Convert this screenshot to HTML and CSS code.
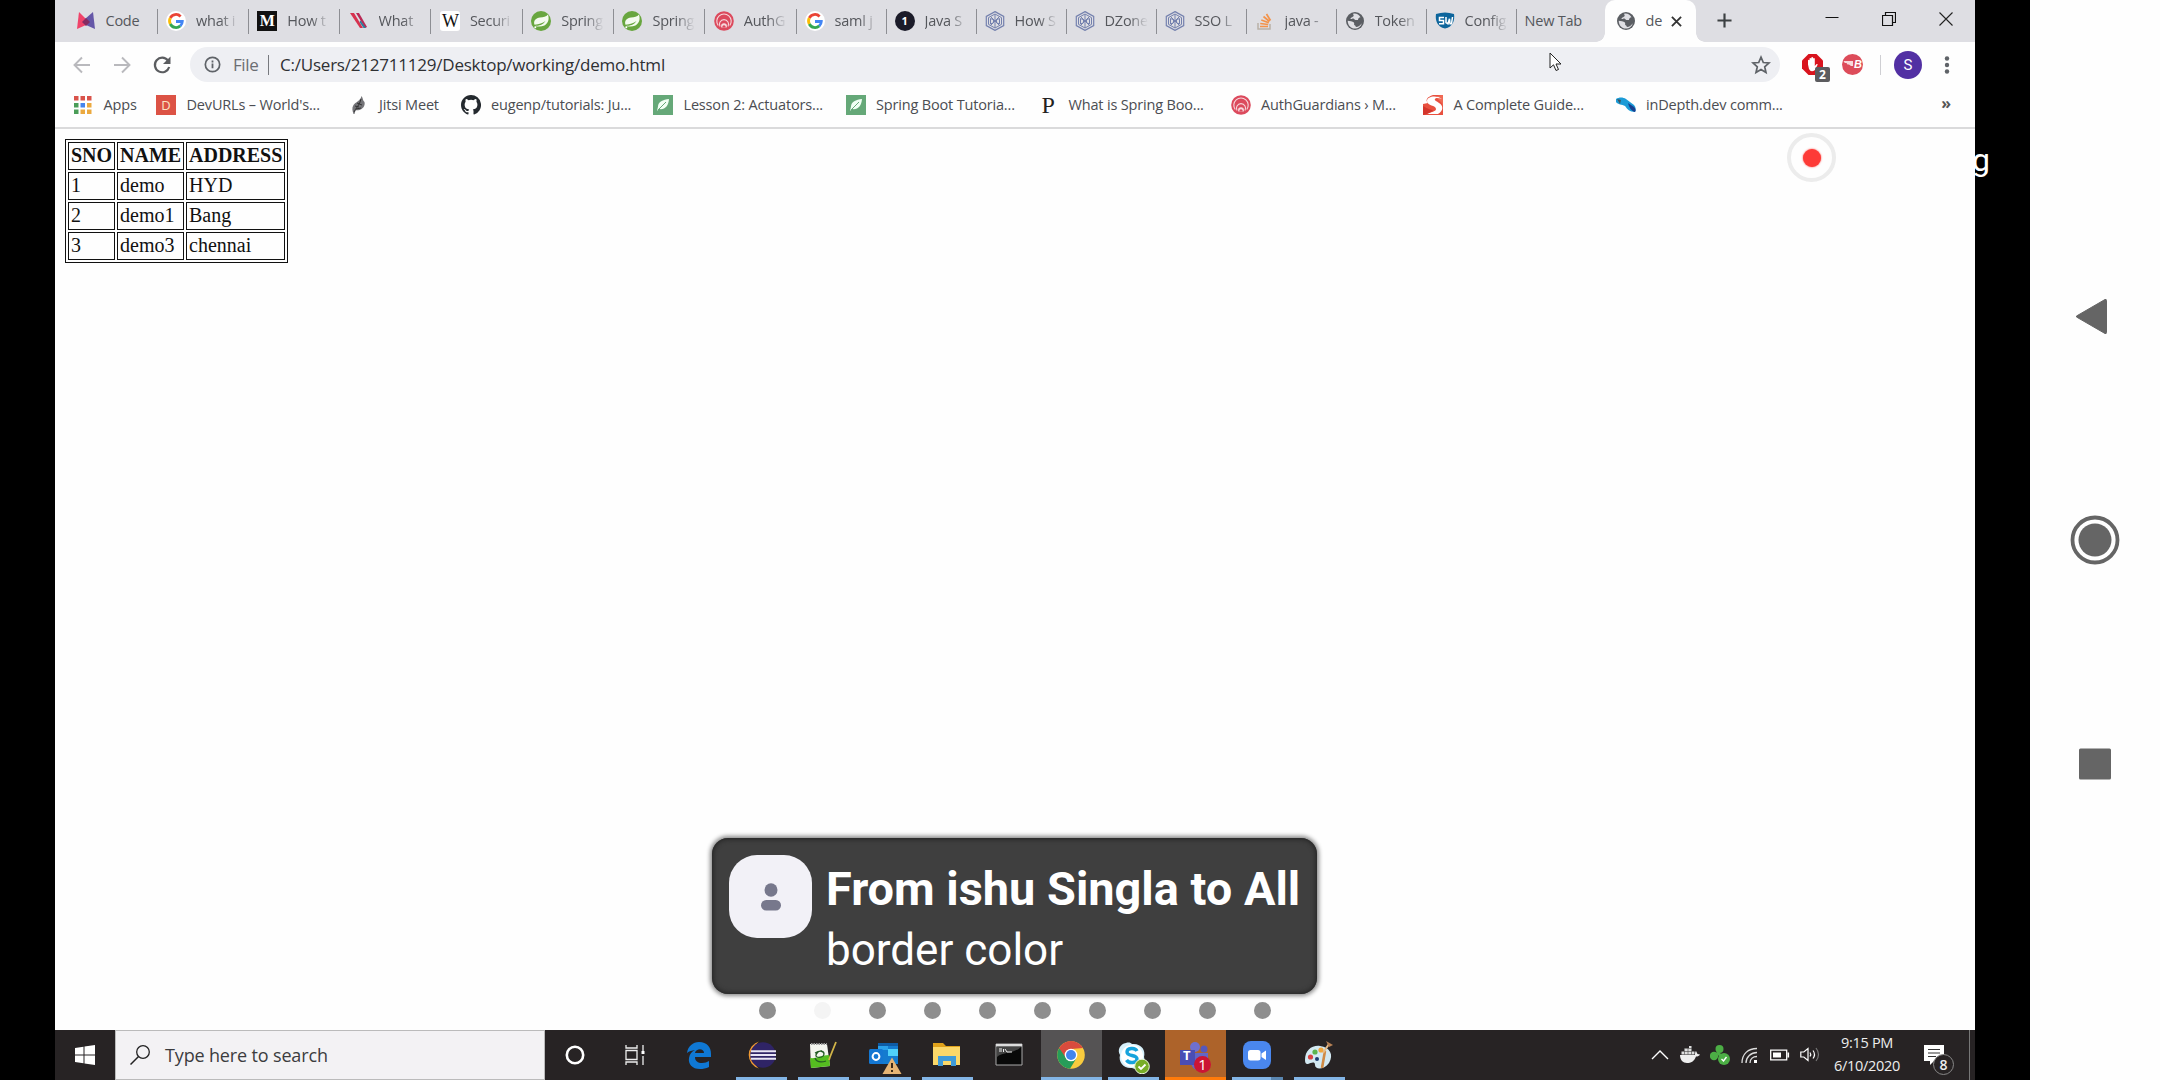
FILE: index.html
```html
<!DOCTYPE html>
<html lang="en">
<head>
<meta charset="utf-8">
<title>demo.html</title>
<link rel="stylesheet" href="styles.css">
</head>
<body>
<svg class="defs" width="0" height="0">
  <symbol id="google" viewBox="0 0 20 20"><circle cx="10" cy="10" r="10" fill="#fff"/><g fill="none" stroke-width="2.8"><path d="M14.6 5.4A6.4 6.4 0 0 0 4.3 7" stroke="#ea4335"/><path d="M4.3 7a6.4 6.4 0 0 0 0 6" stroke="#fbbc05"/><path d="M4.3 13a6.4 6.4 0 0 0 10 1.9" stroke="#34a853"/><path d="M14.3 14.9a6.4 6.4 0 0 0 2-4.4H10" stroke="#4285f4"/></g></symbol>
  <symbol id="spring" viewBox="0 0 20 20"><circle cx="10" cy="10" r="10" fill="#68a63f"/><path d="M17 3.500c1.400 4.500.6 8.500-3.600 11-3.200 1.500-6.500 1.300-9.400.5 4-.3 8-1 10.500-5-3.200 2.500-6 3.200-11 3.800C2 9.500 5 7.200 9 6.500c3.500-.5 6-.5 8-3z" fill="#f4fbef"/><circle cx="4.300" cy="16.300" r="1" fill="#fff"/></symbol>
  <symbol id="auth" viewBox="0 0 20 20"><circle cx="10" cy="10" r="9.800" fill="#dc4a5d"/><g fill="none" stroke="#f6d9dd" stroke-width="1.100"><path d="M4.200 14.500a7.200 7.200 0 1 1 11.600 0"/><path d="M6 15.500a4.600 4.600 0 1 1 8 0"/></g><path d="M7.300 16.500a3 3 0 1 1 5.400 0z" fill="#f6d9dd"/><path d="M8.600 16.500a1.600 1.600 0 1 1 2.800 0z" fill="#dc4a5d"/></symbol>
  <symbol id="dzone" viewBox="0 0 20 20"><g fill="none" stroke="#7481ae"><path d="M10 .6l8.700 4.800v9.200L10 19.400l-8.700-4.800V5.400z" stroke-width="1.200"/><path d="M10 3l6.500 3.600v6.800L10 17l-6.500-3.600V6.600z"/><path d="M10 3v14M5.500 7.500l3 1.200v3l-3 1.300zM14.500 7.500l-3 1.200v3l3 1.300zM6 6l8 8M14 6l-8 8"/></g></symbol>
  <symbol id="globe" viewBox="0 0 20 20"><circle cx="10" cy="10" r="9" fill="#5b5e63"/><path d="M8.200 2.700c3.200-.6 5.800 1 7.300 3.500-1.600.2-2.500 1.300-2.500 2.800h-2.600c-.9 0-1-1.600-2.200-1.600-1 0-1.400 1-2.700.6.200-2 3.200-1.600 3.200-3.400 0-.7-.7-1-.5-1.900z" fill="#dfdfe4"/><path d="M2.700 9.700c2 .6 4.800.2 6.200 1.700.8.900-.3 1.800.5 2.700.8.800 1.500.6 1.400 2 2.700-.1 4.300-1.800 6-3.900-1 3.800-4 5.300-6.800 5.300-4.300 0-7.300-3.400-7.300-7.800z" fill="#dfdfe4"/></symbol>
  <symbol id="leaf" viewBox="0 0 20 20"><path fill="#65a878" d="M0 0h20v20H0z"/><path d="M16 4C10 4.500 5 7 5 11.500L4 16l2-2c6 1 9.500-3 10-10z" fill="#f0fff4"/><path d="M5 15l8-8" stroke="#65a878"/></symbol>
</svg>
<div class="frame">
 <div class="desktop">
  <header class="tabs">
    <div class="tab"><svg class="ic" viewBox="0 0 20 20"><path d="M3 1l8 8-1 5-9 4z" fill="#f0436a"/><path d="M17 1l-8 7 1 6 9 4z" fill="#6557a8"/><path d="M10 7l4 4-4 4-4-4z" fill="#852b62"/></svg><span>Code</span></div>
    <div class="tab wide"><svg class="ic"><use href="#google"/></svg><span>what i</span></div>
    <div class="tab wide"><b class="ic medium">M</b><span>How t</span></div>
    <div class="tab wide"><svg class="ic" viewBox="0 0 20 20"><path d="M1 2h4l9 15h-3z" fill="#d7324f"/><path d="M7 2h3l8 14-2 1z" fill="#b92955"/><path d="M11.500 9.500l5.500 7.500h-2.500l-4-6z" fill="#2b7d9c"/></svg><span>What</span></div>
    <div class="tab wide"><b class="ic wiki">W</b><span>Securi</span></div>
    <div class="tab wide"><svg class="ic"><use href="#spring"/></svg><span>Spring</span></div>
    <div class="tab wide"><svg class="ic"><use href="#spring"/></svg><span>Spring</span></div>
    <div class="tab wide"><svg class="ic"><use href="#auth"/></svg><span>AuthG</span></div>
    <div class="tab"><svg class="ic"><use href="#google"/></svg><span>saml j</span></div>
    <div class="tab"><b class="ic one">1</b><span>Java S</span></div>
    <div class="tab"><svg class="ic"><use href="#dzone"/></svg><span>How S</span></div>
    <div class="tab"><svg class="ic"><use href="#dzone"/></svg><span>DZone</span></div>
    <div class="tab"><svg class="ic"><use href="#dzone"/></svg><span>SSO L</span></div>
    <div class="tab"><svg class="ic" viewBox="0 0 20 20"><path d="M3 12v6h12v-5" fill="none" stroke="#b9b1a8" stroke-width="1.500"/><path d="M5 15.500h8M5.200 12.500l8 1M6.300 9l7.500 2.700M8.500 5.500l6 5M11.500 3l4 6.500" stroke="#f3934a" stroke-width="1.700"/></svg><span>java -</span></div>
    <div class="tab"><svg class="ic"><use href="#globe"/></svg><span>Token</span></div>
    <div class="tab"><svg class="ic" viewBox="0 0 20 20"><path d="M1 3c6-2 12-2 18 0 1 6-1 13-9 14.500C2 16 0 9 1 3z" fill="#0d659c"/><path d="M9 6.500H4.500v3h4v3.300H4M11 6v5.500l2 1.300 1.500-5 .5 5h1.500L17.500 6" fill="none" stroke="#fff" stroke-width="1.500"/></svg><span>Config</span></div>
    <div class="tab text-only"><span>New Tab</span></div>
    <div class="tab active"><svg class="ic"><use href="#globe"/></svg><span>de</span><svg class="x" viewBox="0 0 12 12"><path d="M1 1l10 10M11 1L1 11" stroke="#333" stroke-width="2"/></svg></div>
    <svg class="plus" viewBox="0 0 16 16"><path d="M8 .5v15M.5 8h15" stroke="#3c4043" stroke-width="2.300"/></svg>
    <div class="winctl">
      <svg viewBox="0 0 14 14"><path d="M.5 5.500h13" stroke="#111"/></svg>
      <svg viewBox="0 0 14 14"><path d="M.5 3.500h10v10H.5zM3.500 3V.5h10v10H11" fill="none" stroke="#111" stroke-width="1.200"/></svg>
      <svg viewBox="0 0 14 14"><path d="M.5.5l13 13M13.500.5l-13 13" stroke="#222" stroke-width="1.100"/></svg>
    </div>
  </header>
  <div class="toolbar">
    <svg class="nav" viewBox="0 0 20 20"><path d="M18 10H3M10 2.500L2.500 10l7.500 7.500" fill="none" stroke="#b9b9bd" stroke-width="1.900"/></svg>
    <svg class="nav" viewBox="0 0 20 20"><path d="M2 10h15M10 2.500l7.500 7.500-7.500 7.500" fill="none" stroke="#b9b9bd" stroke-width="1.900"/></svg>
    <svg class="nav" viewBox="0 0 20 20"><path d="M16 5.500A7.300 7.300 0 1 0 17.200 12" fill="none" stroke="#5b5d60" stroke-width="2.200"/><path d="M18.500 1.500v7.500H11z" fill="#5b5d60"/></svg>
    <div class="omni">
      <svg class="info" viewBox="0 0 18 18"><circle cx="9" cy="9" r="7.600" fill="none" stroke="#5f6368" stroke-width="1.800"/><path d="M9 8v5M9 4.800v2" stroke="#5f6368" stroke-width="1.900"/></svg>
      <span class="file">File</span><i></i><span class="url">C:/Users/212711129/Desktop/working/demo.html</span>
      <svg class="star" viewBox="0 0 20 20"><path d="M10 2.200l2.300 5.300 5.700.5-4.300 3.800 1.300 5.700-5-3-5 3 1.300-5.700L2 8l5.700-.5z" fill="none" stroke="#5f6368" stroke-width="1.700"/></svg>
    </div>
    <div class="ext abp"><svg viewBox="0 0 21 21"><path d="M6.500 0h8L21 6.500v8L14.500 21h-8L0 14.500v-8z" fill="#d9141e"/><path d="M6 10.500V6.200q.8-1 1.500 0V10V4.400q.9-1 1.800 0V9.500V3.600q1-1 1.800 0V9.500V4.500q.9-1 1.700 0V12l1.800-2q1.300-.3 1 .8L13 16q-4 3-6-1z" fill="#fff"/></svg><b>2</b></div>
    <div class="ext bb"><svg viewBox="0 0 21 21"><circle cx="10.500" cy="10.500" r="10.500" fill="#dd4c5a"/><path d="M1.500 7h9.500v5H9l-2-1.500H5.500L4.500 9H2.800z" fill="#f8d9dc"/></svg><b>B</b></div>
    <i class="sep"></i>
    <div class="avatar">S</div>
    <svg class="dots3" viewBox="0 0 6 20"><g fill="#5f6368"><circle cx="3" cy="3.500" r="2.200"/><circle cx="3" cy="10" r="2.200"/><circle cx="3" cy="16.500" r="2.200"/></g></svg>
  </div>
  <nav class="marks">
    <div><svg class="ic" viewBox="0 0 20 20"><path fill="#d9534b" d="M1 1h4.500v4.500H1zM7.500 1H12v4.500H7.500zM14 1h4.500v4.500H14z"/><path fill="#4a9d58" d="M1 8h4.500v4.500H1zM1 14.500h4.500V19H1z"/><path fill="#4484ee" d="M7.500 8H12v4.500H7.500z"/><path fill="#eba93f" d="M14 8h4.500v4.500H14zM7.500 14.500H12V19H7.500zM14 14.500h4.500V19H14z"/></svg><span>Apps</span></div>
    <div><b class="ic dee">D</b><span>DevURLs – World's...</span></div>
    <div><svg class="ic" viewBox="0 0 20 20"><path d="M4.500 19c-1-3-2-6 0-9 2-3 7-4 8-9 2 3 1 4 3 6 1 4-2 7-5 8-2 .5-3 0-4 .500L5.500 19z" fill="#747478"/><path d="M5 17c1-3 6-7 7-13M6 11l4 1M8 8l5 2M7 14l5-1" stroke="#333" fill="none"/></svg><span>Jitsi Meet</span></div>
    <div><svg class="ic" viewBox="0 0 16 16"><path fill="#24292e" d="M8 0C3.580 0 0 3.580 0 8c0 3.540 2.290 6.530 5.470 7.590.4.070.55-.17.55-.38 0-.19-.01-.82-.01-1.490-2.010.37-2.530-.49-2.690-.94-.09-.23-.48-.94-.82-1.130-.28-.15-.68-.52-.01-.53.63-.01 1.080.58 1.230.82.72 1.210 1.870.87 2.330.66.07-.52.28-.87.51-1.070-1.780-.2-3.640-.89-3.640-3.950 0-.87.31-1.590.82-2.150-.08-.2-.36-1.020.08-2.120 0 0 .67-.21 2.200.82a7.600 7.600 0 0 1 4 0c1.530-1.040 2.200-.82 2.200-.82.44 1.100.16 1.920.08 2.120.51.56.82 1.270.82 2.150 0 3.070-1.870 3.750-3.650 3.950.29.25.54.73.54 1.480 0 1.070-.01 1.930-.01 2.200 0 .21.15.46.55.38A8 8 0 0 0 8 0z"/></svg><span>eugenp/tutorials: Ju...</span></div>
    <div><svg class="ic"><use href="#leaf"/></svg><span>Lesson 2: Actuators...</span></div>
    <div><svg class="ic"><use href="#leaf"/></svg><span>Spring Boot Tutoria...</span></div>
    <div><b class="ic pee">P</b><span>What is Spring Boo...</span></div>
    <div><svg class="ic"><use href="#auth"/></svg><span>AuthGuardians › M...</span></div>
    <div><svg class="ic" viewBox="0 0 20 20"><path d="M0 0h20v20H0z" fill="#e8503f"/><path d="M0 0h10C4 2 2 5 5 8L0 9z" fill="#fff"/><path d="M20 0c-4 0-7 1-6 3 1 2 6 4 6 9z" fill="#f06a55"/><path d="M19 4C14 0 4 1 4 6c0 5 9 4 9 8 0 3-6 3-9 5h11c5-3 6-8 1-11-3-2-5-3-4-4 1-1.500 4-1 7 0z" fill="#fff"/><path d="M0 11c5 3 8 4 10 4-2 3-6 4-10 5z" fill="#d4352b"/></svg><span>A Complete Guide...</span></div>
    <div><svg class="ic" viewBox="0 0 20 20"><path d="M0 4c3-2 7-2 10 0l8 6c2 2 2 5 1 7-5 0-8-3-10-6C6 9 2 10 0 7z" fill="#1b9bd7"/><path d="M12 8l6 4c2 2 2 4 1 5-4-1-6-5-7-9z" fill="#173f91"/><path d="M1 4l4 1-1 4z" fill="#3a5661"/></svg><span>inDepth.dev comm...</span></div>
    <b class="more">»</b>
  </nav>
  <main class="page">
    <table>
      <tr><th>SNO</th><th>NAME</th><th>ADDRESS</th></tr>
      <tr><td>1</td><td>demo</td><td>HYD</td></tr>
      <tr><td>2</td><td>demo1</td><td>Bang</td></tr>
      <tr><td>3</td><td>demo3</td><td>chennai</td></tr>
    </table>
  </main>
  <footer class="taskbar">
    <div class="start"><svg viewBox="0 0 20 20"><path fill="#fff" d="M0 3l8.500-1.200v7.700H0zM9.500 1.600L20 0v9.500H9.500zM0 10.500h8.500v7.700L0 17zM9.500 10.500H20V20L9.500 18.400z"/></svg></div>
    <div class="search"><svg viewBox="0 0 20 20"><circle cx="13" cy="7" r="6.300" fill="none" stroke="#222" stroke-width="1.300"/><path d="M8.500 11.500L.5 19.500" stroke="#222" stroke-width="1.500"/></svg><span>Type here to search</span></div>
    <div class="apps">
      <div class="app"><svg viewBox="0 0 30 30"><circle cx="15" cy="15" r="8.200" fill="none" stroke="#fff" stroke-width="2.600"/></svg></div>
      <div class="app"><svg viewBox="0 0 30 30"><g fill="none" stroke="#eee" stroke-width="1.300"><path d="M4 10.500h11v9H4zM4 5v3h11V5M4 25v-3h11v3M21 5v6M21 16v9"/></g><path fill="#fff" d="M19.500 11h3v3h-3z"/></svg></div>
      <div class="app"><svg viewBox="0 0 30 30"><path d="M3 13C4 6 9 2 15 2c8 0 12 5 12 12v3H11c0 4 3 6 7 6 3 0 5-1 7-2v6c-3 1.500-6 2-9 2C8 29 4 24 5 18c.6-4 3-6.500 6-8-3 .5-6 1-8 3zM11 13h9c0-5-8-5-9 0z" fill="#0f78d4"/></svg></div>
      <div class="app run"><svg viewBox="0 0 30 30"><path d="M13 1.500a14 14 0 0 0 0 27C6 24 6 6 13 1.500z" fill="#f39b32"/><circle cx="17" cy="15" r="12.800" fill="#2f2466"/><path d="M5 11.300h25M4.500 15H30M5 18.700h25" stroke="#e9e6f5" stroke-width="2"/></svg></div>
      <div class="app run"><svg viewBox="0 0 30 30"><path d="M2 4h17l3 22-19 2z" fill="#f4f5ef"/><path d="M2 18c6 1 12-3 19-3l1 11-19 2z" fill="#55bd20"/><path d="M3 4h16" stroke="#999" stroke-width="2" stroke-dasharray="1.500 1"/><path d="M7 13c5-3 9-2 9 1s-4 4-7 3 1-7 5-6M7 18c2 5 8 4 11 3" stroke="#245c25" stroke-width="1.300" fill="none"/><path d="M28 2L22 17l-1 3" stroke="#d1b448" stroke-width="1.800"/></svg></div>
      <div class="app run"><svg class="wide" viewBox="0 0 34 34"><path fill="#147bcf" d="M10 3h20v21H10z"/><path fill="#2aa1ea" d="M10 3h10v7H10z"/><path fill="#50d1fa" d="M20 9h10v7H20z"/><path fill="#0e5ba4" d="M10 3h20v3H10z"/><rect x="1" y="9" width="14" height="15" rx="1.500" fill="#1477d2"/><circle cx="8" cy="16.500" r="3.400" fill="none" stroke="#fff" stroke-width="2"/><path d="M24 17.500L33.500 34h-19z" fill="#e6b473"/><path d="M24 23v5M24 30v2" stroke="#3d2b18" stroke-width="2"/></svg></div>
      <div class="app run"><svg viewBox="0 0 30 30"><path d="M1 3h10l3 3h14v19H1z" fill="#e0a21b"/><path d="M1 7h27v18H1z" fill="#fbd869"/><path d="M6 26V16h18v10h-5v-5h-8v5z" fill="#3f9bd8"/></svg></div>
      <div class="app"><svg viewBox="0 0 30 30"><path d="M2 4h26v21H2z" fill="#090909" stroke="#aaa"/><path d="M2 4h26v2.500H2z" fill="#ddd"/><path d="M3 7h24c-7 7-19 5-24 10z" fill="#444"/><path d="M5 9h3M5 11h3M9.500 9v3M11 9l2 3h5" stroke="#eee" fill="none"/></svg></div>
      <div class="app run full on"><svg viewBox="0 0 30 30"><circle cx="15" cy="15" r="13.800" fill="#f8cb3e"/><path d="M3.100 8A13.800 13.800 0 0 0 14 28.800L20 19z" fill="#279c59"/><path d="M3.100 8A13.800 13.800 0 0 1 27 8l-12 1-5 9z" fill="#d84b3d"/><circle cx="15" cy="15" r="6.300" fill="#fff"/><circle cx="15" cy="15" r="5" fill="#4285ed"/></svg></div>
      <div class="app run"><svg class="wide" viewBox="0 0 34 34"><path d="M10 3c3-1 5 0 6 1 9-1 14 6 12 13 3 9-5 14-12 11C8 29 2 22 4 15 1 10 4 4 10 3z" fill="#d7f1fc"/><circle cx="16" cy="16" r="11" fill="#fff"/><path d="M21 11c-2-4-10-3-10 1 0 5 10 2 10 7 0 4-8 5-10.500 1" fill="none" stroke="#16a3dc" stroke-width="3.400"/><circle cx="26" cy="26.500" r="7.300" fill="#78ad28" stroke="#e9f7dc"/><path d="M22.500 26.500l2.500 2.500 4.500-4.500" stroke="#fff" stroke-width="1.800" fill="none"/></svg></div>
      <div class="app run full team"><svg class="wide" viewBox="0 0 34 34"><circle cx="17" cy="7" r="5" fill="#6f70ce"/><circle cx="26" cy="9" r="3.500" fill="#5558bd"/><path d="M13 13h17v10q-4 7-9 7-8 0-8-9z" fill="#6366c5"/><path d="M2 10h15v15H2z" fill="#4a4db5"/></svg><b class="tee">T</b><b class="badge">1</b></div>
      <div class="app run zoomapp"><svg viewBox="0 0 30 30"><rect x="1" y="1" width="28" height="28" rx="8" fill="#4a87ee"/><rect x="6" y="10" width="12.500" height="10.500" rx="2.500" fill="#fff"/><path d="M19.500 13.500L24 10.500v9.500l-4.500-3z" fill="#fff"/></svg></div>
      <div class="app run"><svg viewBox="0 0 30 30"><path d="M1 20C1 10 8 5 16 6c10 1 14 9 9 17-5 7-14 7-14 2 0-4-4-2-7-1-2 .5-3-1-3-4z" fill="#d3e9f2"/><circle cx="6.500" cy="17" r="2.600" fill="#d94444"/><circle cx="11" cy="12" r="2.600" fill="#5cb44d"/><circle cx="17" cy="10" r="2.600" fill="#f0a63c"/><circle cx="13" cy="19" r="2" fill="#1d3c70"/><path d="M18 28l3-17" stroke="#d08b45" stroke-width="2.600"/><path d="M19 13L25 4" stroke="#e4bc8b" stroke-width="2"/><path d="M22 1l7 4-4 2z" fill="#b88255"/></svg></div>
    </div>
    <div class="tray">
      <svg viewBox="0 0 20 20"><path d="M2 14l8-8 8 8" fill="none" stroke="#fff" stroke-width="1.400"/></svg>
      <svg viewBox="0 0 20 20"><path d="M0 10h15c0-2 0-3 1-4l1.500 3 2.500.5c-1 1.500-2 2-4 2-2 5-5 6.500-9 6.500-4 0-7-3-7-8z" fill="#eee"/><path d="M1.500 6.500h13v3h-13zM4 3.500h8v2.500H4zM9 1h3v2H9z" fill="#ddd"/><path d="M4.500 3v6.500M8 3v6.500M11.500 1v8.500" stroke="#444" stroke-width=".6"/></svg>
      <svg viewBox="0 0 20 20"><g fill="#4cae45"><circle cx="9.500" cy="4" r="4"/><circle cx="4" cy="11" r="4.200"/><circle cx="14" cy="14" r="6"/></g><path d="M7 7l5 5" stroke="#4cae45" stroke-width="3"/><path d="M11.500 14l2 2 3-4" fill="none" stroke="#fff" stroke-width="1.400"/></svg>
      <svg viewBox="0 0 20 20"><g fill="none" stroke="#ddd" stroke-width="1.300"><path d="M2 18C2 9 8 3.500 17 3.500M6 18c0-6 5-10.500 11-10.500M10 18c0-4 3-6.500 7-6.500"/></g><path d="M14 15h3v3h-3z" fill="#fff"/></svg>
      <svg viewBox="0 0 20 20"><path d="M.7 5.200h16v9.600H.7z" fill="none" stroke="#fff" stroke-width="1.300"/><path d="M3 7.500h8v5H3z" fill="#fff"/><path d="M18.300 7.500v5" stroke="#fff" stroke-width="1.600"/></svg>
      <svg viewBox="0 0 20 20"><path d="M.8 7h3L8 3.500v12l-4.200-3.500h-3z" fill="none" stroke="#fff" stroke-width="1.200"/><path d="M10 7.500q1.500 2 0 4M13 5.500q3 4 0 8" fill="none" stroke="#fff" stroke-width="1.200"/><path d="M16 3q5 6.500 0 13" fill="none" stroke="#777" stroke-width="1.200"/></svg>
    </div>
    <div class="clock"><span>9:15 PM</span><span>6/10/2020</span></div>
    <div class="note"><svg viewBox="0 0 20 20"><path d="M0 0h20v16H10l-4 4v-4H0z" fill="#fff"/><path d="M4 4.500h12M4 8h12M4 11.500h8" stroke="#333" stroke-width="1.100"/></svg><b>8</b></div>
  </footer>
  <svg class="cursor" viewBox="0 0 13 20"><path d="M1 1v15l3.500-3.200L7 18.500l2.500-1-2.500-5.500h5z" fill="#fff" stroke="#222"/></svg>
  <div class="rec"><i></i></div>
  <span class="rectext">g</span>
  <section class="toast">
    <div class="who"><svg viewBox="0 0 20 28"><ellipse cx="10" cy="7" rx="6.500" ry="6.800" fill="#77788c"/><rect y="17" width="20" height="10.500" rx="5.200" fill="#77788c"/></svg></div>
    <div class="msg"><b>From ishu Singla to All</b><span>border color</span></div>
  </section>
  <div class="pager"><i></i><i class="cur"></i><i></i><i></i><i></i><i></i><i></i><i></i><i></i><i></i></div>
 </div>
 <aside class="android">
   <svg viewBox="0 0 52 52"><path d="M7.500 26L36 9.500q1.500-.5 1.500 1v32q0 1.500-1.500 1L7.500 27z" fill="#656565" stroke="#656565"/></svg>
   <svg viewBox="0 0 52 52"><circle cx="26" cy="26" r="22.500" fill="none" stroke="#656565" stroke-width="3.800"/><circle cx="26" cy="26" r="16.500" fill="#656565"/></svg>
   <svg viewBox="0 0 52 52"><rect x="10" y="10.500" width="32" height="31" rx="1.500" fill="#656565"/></svg>
 </aside>
</div>
</body>
</html>
```
FILE: styles.css
```css
* { box-sizing: border-box; }
body { margin: 0; background: #000; font-family: "Open Sans", "Noto Sans", sans-serif; }
svg { display: block; flex: none; }
.defs { position: absolute; }
.frame { display: flex; width: 2160px; height: 1080px; padding-left: 55px; overflow: hidden; }
.desktop { position: relative; display: flex; flex-direction: column; flex: none; width: 1920px; height: 1080px; background: #fefefe; }

.tabs { display: flex; align-items: stretch; height: 42px; background: #dedee3; padding-left: 11.500px; }
.tab { position: relative; display: flex; align-items: center; width: 90px; flex: none; padding: 0 7px 0 9px; font-size: 14.500px; color: #55575c; }
.tab.wide { width: 91.300px; padding-left: 9.500px; }
.tab > span { margin-left: 10px; padding-bottom: 2px; flex: 1; min-width: 0; overflow: hidden; white-space: pre; letter-spacing: -.25px; -webkit-mask-image: linear-gradient(90deg, #000 24px, transparent 43px); mask-image: linear-gradient(90deg, #000 24px, transparent 43px); }
.tab:first-child > span, .tab.text-only > span, .tab.active > span { -webkit-mask-image: none; mask-image: none; }
.tab.text-only > span { margin-left: 0; }
.tab + .tab:not(.active)::before { content: ""; position: absolute; left: 0; top: 9px; width: 1px; height: 25px; background: #8d8e93; }
.tab.active { background: #fefefe; border-radius: 10px 10px 0 0; width: 91px; margin-left: -1px; padding-left: 11px; padding-right: 14px; }
.tab.active::before, .tab.active::after { content: ""; position: absolute; bottom: 0; width: 9px; height: 9px; }
.tab.active::before { left: -9px; background: radial-gradient(circle at 0 0, transparent 8.500px, #fefefe 9px); }
.tab.active::after { right: -9px; background: radial-gradient(circle at 100% 0, transparent 8.500px, #fefefe 9px); }
.ic { width: 20px; height: 20px; flex: none; display: block; text-align: center; line-height: 20px; }
.medium { background: #111; color: #fff; font: bold 16px/20px "Liberation Serif", serif; }
.wiki { background: #fff; color: #111; font: 18px/20px "Liberation Serif", serif; border-radius: 3px; letter-spacing: -1px; }
.one { background: #1b1b29; color: #fff; border-radius: 50%; font-size: 11px; }
.x { width: 11px; height: 11px; }
.plus { width: 15px; height: 15px; margin: 13px 0 0 21px; }
.winctl { display: flex; gap: 43px; margin: 12px 22px 0 auto; }
.winctl svg { width: 14px; height: 14px; }

.toolbar { display: flex; align-items: center; height: 45px; padding-left: 17px; }
.nav { width: 20px; height: 20px; margin-right: 20px; }
.omni { display: flex; align-items: center; width: 1590px; height: 35px; margin-left: -2px; border-radius: 18px; background: #eeeff3; padding: 0 13px 0 14px; font-size: 17px; color: #2e3033; }
.info { width: 17px; height: 17px; }
.file { margin-left: 12px; width: 27px; color: #6b6d72; letter-spacing: -.4px; padding-bottom: 1px; }
.omni i { width: 1px; height: 20px; background: #77797e; margin: 0 11px 0 8px; }
.url { letter-spacing: -.22px; flex: 1; white-space: nowrap; padding-bottom: 1px; }
.star { width: 20px; height: 20px; margin-right: -4px; }
.ext { position: relative; width: 21px; height: 21px; }
.ext svg { width: 21px; height: 21px; }
.abp { margin-left: 22px; }
.abp b { position: absolute; left: 13px; top: 13px; width: 15px; height: 15px; border-radius: 2px; background: #5c5c5f; color: #fff; font: bold 12px/16px "Open Sans", sans-serif; text-align: center; }
.bb { margin-left: 19px; }
.bb b { position: absolute; right: 1px; top: 0; color: #fff; font: italic bold 11px/21px "Liberation Sans", sans-serif; }
.sep { width: 1px; height: 20px; background: #cfcfd3; margin-left: 17px; }
.avatar { width: 28px; height: 28px; border-radius: 50%; background: #5230a3; color: #fff; font: 15px/28px "Roboto", sans-serif; text-align: center; margin-left: 13px; }
.dots3 { width: 6px; height: 20px; margin-left: 22px; }

.marks { display: grid; grid-template-columns: 83px 192.500px 112px repeat(7, 192.500px); align-items: center; position: relative; height: 42px; padding: 0 0 5px 18px; border-bottom: 2px solid #dadadb; font-size: 14.500px; color: #4b4d52; }
.marks div { display: flex; align-items: center; gap: 10.500px; white-space: nowrap; letter-spacing: -.17px; }
.dee { background: #dc5345; color: #fbe3c4; font-weight: 400; font-size: 13px; }
.pee { color: #222; font: 24px/20px "Liberation Serif", serif; }
.more { position: absolute; right: 24px; top: 5px; font-size: 16px; color: #555; }

.page { flex: 1; padding: 10px; }
table { border: 1px solid #111; border-collapse: separate; border-spacing: 2px; font: 20px/24px "Liberation Serif", serif; color: #111; table-layout: fixed; width: 223px; }
th, td { border: 1px solid #111; padding: 0 2px 2px; height: 28px; text-align: left; white-space: nowrap; }
th:nth-child(1) { width: 47px; }
th:nth-child(2) { width: 67px; }

.taskbar { display: flex; height: 50px; background: #272324; color: #eee; }
.start { width: 60px; display: flex; align-items: center; justify-content: center; }
.start svg { width: 20px; height: 20px; }
.search { width: 430px; display: flex; align-items: center; background: #f3f2f4; border: 1px solid #bbb; padding-left: 14px; gap: 15px; color: #3c3c3e; font-size: 18px; letter-spacing: -.15px; }
.search svg { width: 20px; height: 20px; }
.apps { display: flex; margin-left: -1px; }
.app { position: relative; width: 62px; height: 50px; display: flex; align-items: center; justify-content: center; }
.app svg { width: 30px; height: 30px; }
.app svg.wide { width: 34px; height: 34px; margin-top: 3px; }
.app.run::after { content: ""; position: absolute; left: 6px; right: 5px; bottom: 0; height: 3px; background: #83b5e6; }
.app.full { background: linear-gradient(#555354, #555354) 1px 0 / 61px 50px no-repeat; }
.app.full.run::after { left: 1px; right: 0; }
.app.full.team { background: linear-gradient(#ad632a, #ad632a) 1px 0 / 61px 50px no-repeat; }
.app.full.team::after { background: #ff7b0a; }
.app.zoomapp::after { background: linear-gradient(90deg, #83b5e6 39px, #5a86b0 39px); }
.tee { position: absolute; left: 19px; top: 16px; color: #fff; font-size: 13px; line-height: 18px; }
.badge { position: absolute; left: 30px; top: 26px; width: 17px; height: 17px; border-radius: 50%; background: #cb1534; color: #fff; font-weight: 400; font-size: 15px; line-height: 17px; text-align: center; }
.tray { display: flex; align-items: center; gap: 10px; margin-left: 300px; }
.tray svg { width: 20px; height: 20px; }
.clock { width: 94px; display: flex; flex-direction: column; align-items: center; font-size: 14.500px; line-height: 23px; padding-top: 1px; letter-spacing: -.3px; }
.note { position: relative; flex: 1; margin-right: 5px; border-right: 1px solid #777; padding: 15px 0 0 10px; }
.note svg { width: 20px; height: 20px; }
.note b { position: absolute; left: 19px; top: 24px; width: 21px; height: 21px; border: 1px solid #888; border-radius: 50%; background: #272324; font-size: 14px; line-height: 19px; text-align: center; font-weight: 600; }

.cursor { position: absolute; left: 1494px; top: 52px; width: 13px; height: 20px; }
.rec { position: absolute; left: 1732px; top: 133px; width: 49px; height: 49px; border: 4px solid #ececec; border-radius: 50%; display: flex; align-items: center; justify-content: center; }
.rec i { width: 18px; height: 18px; border-radius: 50%; background: #fd3b37; box-shadow: 0 0 2px #fd3b37; }
.rectext { position: absolute; left: 1917px; top: 141px; color: #fff; font: 32px/38px "Roboto", sans-serif; }
.toast { position: absolute; left: 657px; top: 838px; width: 605px; height: 156px; border-radius: 16px; background: #3f3f3f; box-shadow: 0 0 4px 2px #8a8a8a, inset 0 0 5px 1px #222; display: flex; padding: 17px; color: #fff; font-family: "Roboto", sans-serif; white-space: nowrap; }
.who { width: 83px; height: 83px; border-radius: 28px; background: #f2f1f7; display: flex; align-items: center; justify-content: center; flex: none; }
.who svg { width: 20px; height: 28px; }
.msg { display: flex; flex-direction: column; margin-left: 14px; }
.msg b { font-size: 46.900px; line-height: 60px; margin-top: 4px; }
.msg span { font-size: 44px; line-height: 60px; margin-top: 1px; }
.pager { position: absolute; left: 704px; top: 1002px; display: flex; gap: 38px; }
.pager i { width: 17px; height: 17px; border-radius: 50%; background: #8e8e8e; }
.pager .cur { background: #f4f4f4; }

.android { margin-left: 55px; width: 130px; background: #fefefe; display: flex; flex-direction: column; align-items: center; padding-top: 290px; gap: 172px; }
.android svg { width: 52px; height: 52px; }
```
